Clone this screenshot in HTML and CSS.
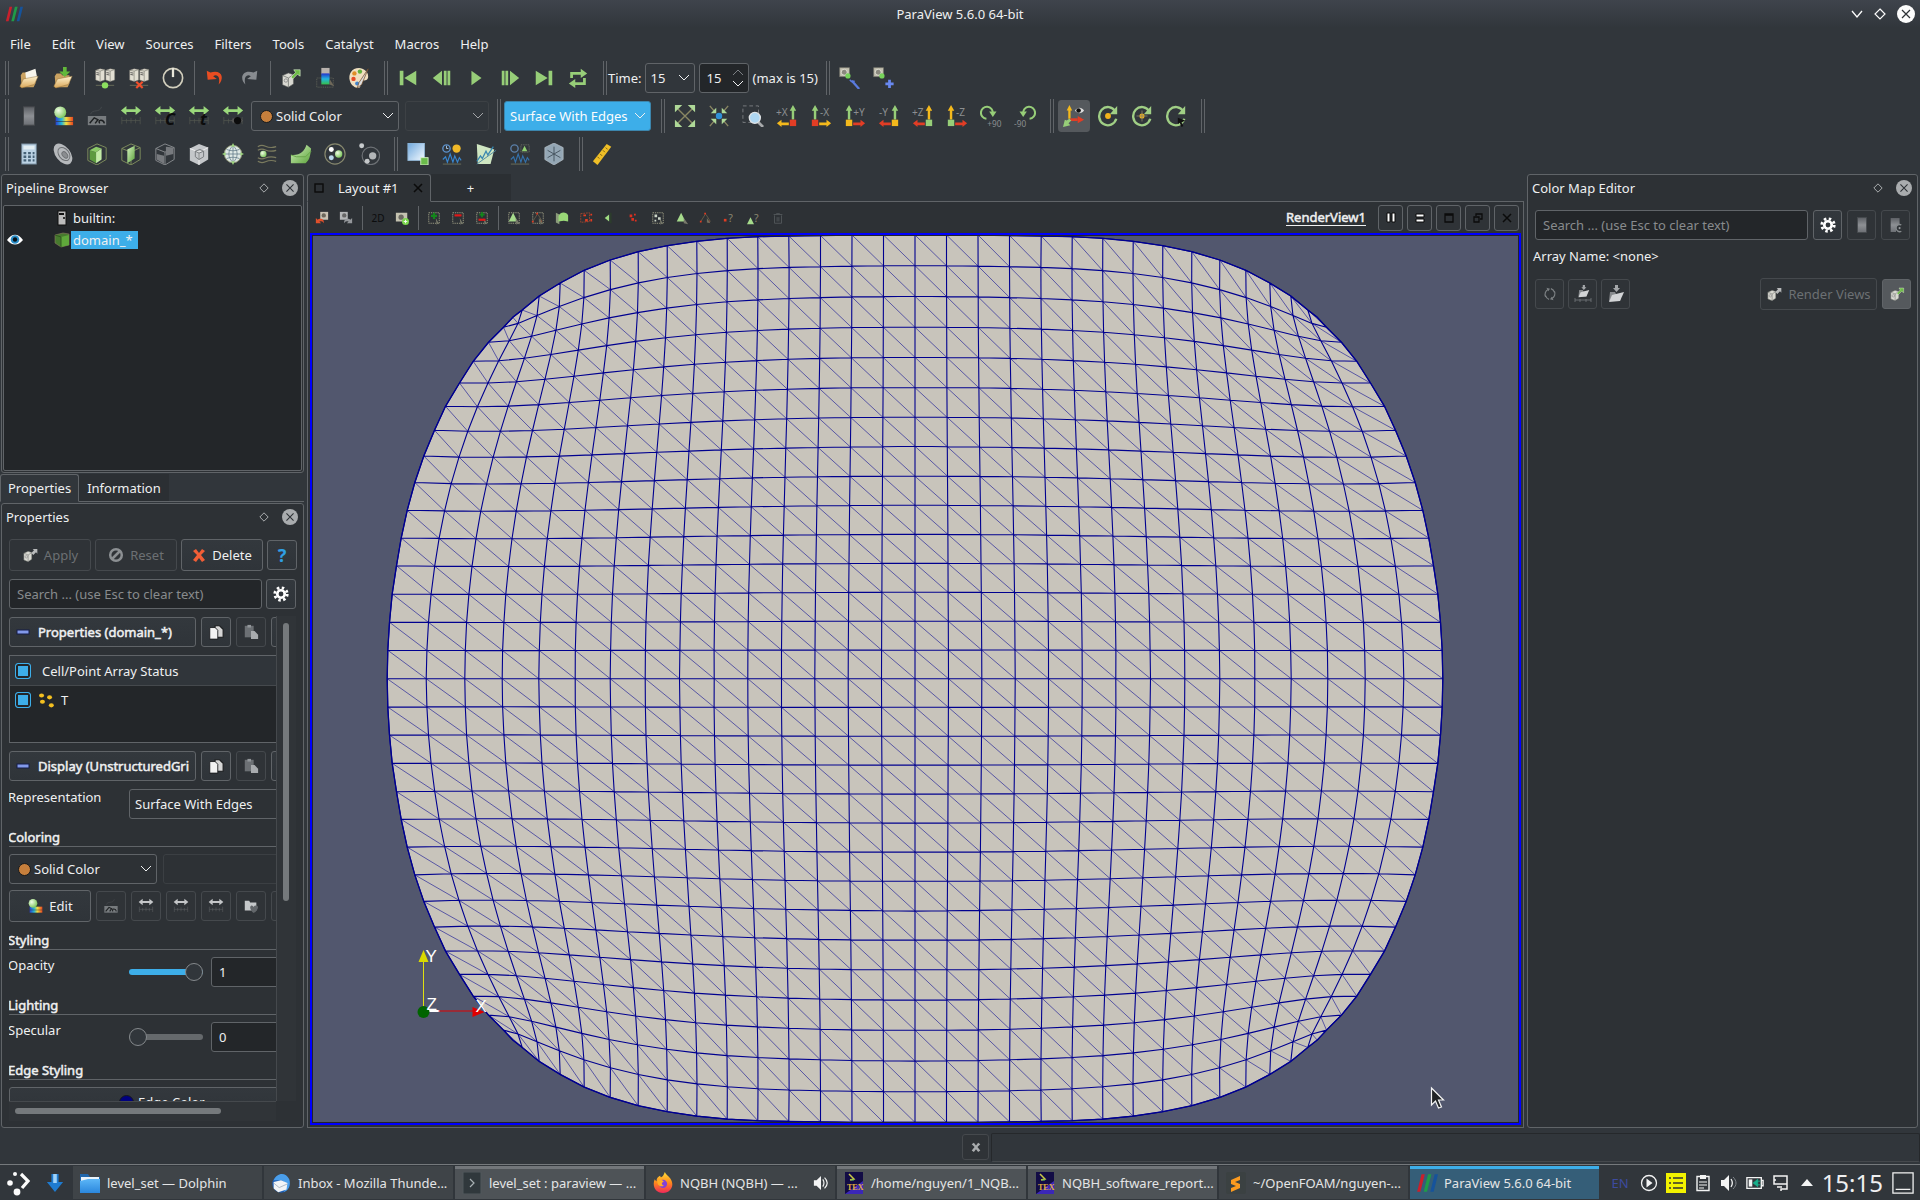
FILE: index.html
```html
<!DOCTYPE html>
<html lang="en">
<head>
<meta charset="utf-8">
<title>ParaView 5.6.0 64-bit</title>
<link rel="stylesheet" href="styles.css">
</head>
<body>
<svg class="library" aria-hidden="true">
  <defs>
    <linearGradient id="g-fold" x1="0" y1="0" x2="0" y2="1"><stop offset="0" stop-color="#fff3cf"/><stop offset="1" stop-color="#d9a658"/></linearGradient>
    <linearGradient id="g-rain" x1="0" y1="0" x2="1" y2="0"><stop offset="0" stop-color="#2a3fd0"/><stop offset=".35" stop-color="#24b8d8"/><stop offset=".6" stop-color="#f0e040"/><stop offset="1" stop-color="#e8431f"/></linearGradient>
    <linearGradient id="g-rainv" x1="0" y1="0" x2="0" y2="1"><stop offset="0" stop-color="#2233cc"/><stop offset=".5" stop-color="#22b5dd"/><stop offset="1" stop-color="#36c04a"/></linearGradient>
    <linearGradient id="g-grey" x1="0" y1="0" x2="0" y2="1"><stop offset="0" stop-color="#5c5f64"/><stop offset=".5" stop-color="#8d9094"/><stop offset="1" stop-color="#6c6f74"/></linearGradient>
    <linearGradient id="g-green" x1="0" y1="0" x2="1" y2="1"><stop offset="0" stop-color="#d5f2bf"/><stop offset="1" stop-color="#5da43c"/></linearGradient>
    <radialGradient id="g-ball" cx=".35" cy=".35" r=".7"><stop offset="0" stop-color="#effbe6"/><stop offset="1" stop-color="#7cc65a"/></radialGradient>
    <linearGradient id="g-blue" x1="0" y1="0" x2="1" y2="1"><stop offset="0" stop-color="#6fa8dd"/><stop offset="1" stop-color="#f4faff"/></linearGradient>
    <linearGradient id="g-fire" x1="0" y1="0" x2="0" y2="1"><stop offset="0" stop-color="#ffdf3a"/><stop offset=".5" stop-color="#ff8a1c"/><stop offset="1" stop-color="#f0275a"/></linearGradient>
    <linearGradient id="g-dolphin" x1="0" y1="0" x2="0" y2="1"><stop offset="0" stop-color="#5cb6f7"/><stop offset="1" stop-color="#2b87dd"/></linearGradient>
  </defs>
  <symbol id="server" viewBox="0 0 16 18"><path d="M1 3l6-2 6 1v14l-6 2-6-2z" fill="#e2dfd3" stroke="#77766d" stroke-width=".6"/><path d="M7 4v14M1 3l6 1 6-2" fill="none" stroke="#77766d" stroke-width=".8"/><path d="M2 6l4 .8M2 8.500l4 .8" stroke="#333" stroke-width="1"/></symbol>
  <symbol id="cubebox" viewBox="0 0 24 24"><path d="M3 9l7-3 6 2v11l-6 4-7-3z" fill="#d9d9d2" stroke="#5f625f" stroke-width=".7"/><path d="M3 9l7 3 6-4M10 12v11" fill="none" stroke="#6c6f6c" stroke-width=".9"/><circle cx="7" cy="15" r="2" fill="none" stroke="#888"/></symbol>
  <symbol id="open" viewBox="0 0 24 24"><path d="M3 9l2-3h5l1 2h8v10l-2 4H4z" fill="#caa261"/><path d="M8 6l11-4 2 10-12 3z" fill="#f7f5ec"/><path d="M2 21l4-8 16-3-4 9-14 4z" fill="url(#g-fold)" stroke="#8e6c34" stroke-width=".5"/></symbol>
  <symbol id="load" viewBox="0 0 24 24"><path d="M3 10l2-3h5l1 2h8v9l-2 4H4z" fill="#caa261"/><path d="M2 21l4-8 16-3-4 9-14 4z" fill="url(#g-fold)" stroke="#8e6c34" stroke-width=".5"/><path d="M12 0h4v5h4l-6 6-6-6h4z" fill="#62b83a"/></symbol>
  <symbol id="connect" viewBox="0 0 24 24"><use href="#server" x="1" y="0" width="13" height="17"/><use href="#server" x="12" y="0" width="13" height="17"/><path d="M2 20h20" stroke="#6b705c"/><circle cx="12" cy="20" r="3.500" fill="#8cdf5f"/></symbol>
  <symbol id="disconnect" viewBox="0 0 24 24"><use href="#server" x="1" y="0" width="13" height="17"/><use href="#server" x="12" y="0" width="13" height="17"/><path d="M2 20h20" stroke="#6b705c"/><path d="M9 16l7 7M16 16l-7 7" stroke="#f0502c" stroke-width="2.400"/></symbol>
  <symbol id="power" viewBox="0 0 24 24"><circle cx="12" cy="12" r="10.500" fill="none" stroke="#d2cfbd" stroke-width="1.800"/><path d="M12 1v10" stroke="#e8e6da" stroke-width="2.500"/></symbol>
  <symbol id="undo" viewBox="0 0 24 24"><path d="M3 4l1 10 10-1-4-3c5-3 8 2 6 9 7-7 3-17-9-13z" fill="#e84d22"/></symbol>
  <symbol id="redo" viewBox="0 0 24 24"><path d="M21 4l-1 10-10-1 4-3c-5-3-8 2-6 9C1 12 5 2 17 6z" fill="#888c90"/></symbol>
  <symbol id="apply" viewBox="0 0 24 24"><use href="#cubebox" width="22" height="24"/><path d="M12 11l5-5-2-3h7v7l-3-2-5 5z" fill="#6dbb46" stroke="#e9f6df" stroke-width=".6"/></symbol>
  <symbol id="applygrey" viewBox="0 0 24 24"><use href="#cubebox" width="22" height="24"/><path d="M14 9l4-4-2-2h7v7l-2-2-4 4z" fill="#b8babb"/></symbol>
  <symbol id="palette-map" viewBox="0 0 24 24"><rect x="3" y="12" width="18" height="10" fill="none" stroke="#66685c" stroke-dasharray="1 1"/><rect x="8" y="1" width="9" height="7" fill="#b9b3ae"/><rect x="8" y="7" width="9" height="12" fill="url(#g-rainv)"/><path d="M17 13l5 8-5-2z" fill="#6f695a"/></symbol>
  <symbol id="palette" viewBox="0 0 24 24"><path d="M12 1C4 1 0 8 2 15c2 7 9 9 11 7 2-3-2-5 2-7 4-1 7 0 7-5 0-5-5-9-10-9z" fill="#f0dfc0"/><circle cx="7" cy="7" r="2.400" fill="#e08d27"/><circle cx="13" cy="5" r="2.400" fill="#62b03d"/><circle cx="6" cy="13" r="2.400" fill="#e74a26"/><circle cx="10" cy="18" r="2.200" fill="#4384cc"/><path d="M22 2L12 17l-2 6 5-4z" fill="#ddd" stroke="#724c29" stroke-width=".8"/></symbol>
  <symbol id="first" viewBox="0 0 24 24"><path d="M3 4h4v16H3zM21 4v16L8 12z" fill="#97ce78"/></symbol>
  <symbol id="prev" viewBox="0 0 24 24"><path d="M12 4v16L2 12zM14 4h3v16h-3zM18 4h3v16h-3z" fill="#97ce78"/></symbol>
  <symbol id="play" viewBox="0 0 24 24"><path d="M7 4l11 8-11 8z" fill="#97ce78"/></symbol>
  <symbol id="next" viewBox="0 0 24 24"><path d="M3 4h3v16H3zM7 4h3v16H7zM12 4l10 8-10 8z" fill="#97ce78"/></symbol>
  <symbol id="last" viewBox="0 0 24 24"><path d="M17 4h4v16h-4zM3 4l13 8-13 8z" fill="#97ce78"/></symbol>
  <symbol id="loop" viewBox="0 0 24 24"><path d="M5 12V7h11M19 12v6H8" fill="none" stroke="#97ce78" stroke-width="3"/><path d="M15 2l7 5-7 5zM9 13l-7 5 7 5z" fill="#97ce78"/></symbol>
  <symbol id="camera" viewBox="0 0 16 16"><rect x="1" y="1" width="13" height="12" fill="#c3c1b0" stroke="#77766d"/><circle cx="7" cy="7" r="4" fill="#8a897e" stroke="#ecebe0"/><circle cx="12" cy="12" r="3.500" fill="#76d35a"/></symbol>
  <symbol id="camwrench" viewBox="0 0 24 24"><use href="#camera" x="0" y="0" width="13" height="13"/><path d="M14 15l8 9" stroke="#5a7be0" stroke-width="2.500"/><path d="M12 14a3 3 0 0 0 5 1" fill="none" stroke="#5a7be0" stroke-width="1.800"/></symbol>
  <symbol id="camplus" viewBox="0 0 24 24"><use href="#camera" x="0" y="0" width="13" height="13"/><path d="M18 14v9M13.500 18.500h9" stroke="#6888f0" stroke-width="3"/></symbol>
  <symbol id="bar" viewBox="0 0 24 24"><rect x="6" y="2" width="12" height="20" fill="url(#g-grey)" stroke="#46494d"/></symbol>
  <symbol id="colormap" viewBox="0 0 24 24"><rect x="4" y="13" width="19" height="9" fill="url(#g-rain)"/><path d="M4 18h19" stroke="#2f3438" stroke-width=".7"/><circle cx="9" cy="8" r="6.500" fill="url(#g-ball)"/></symbol>
  <symbol id="opac" viewBox="0 0 24 24"><rect x="2" y="12" width="20" height="10" fill="#777b7e"/><path d="M4 20l5-6 4 2-3 4M15 20c-3-4 4-5 5 0" fill="none" stroke="#1d2022" stroke-width="1.600"/><path d="M5 10C7 4 15 9 17 2" fill="none" stroke="#45494d"/></symbol>
  <symbol id="range" viewBox="0 0 24 24"><path d="M1 6l6-5v3.500h10V1l6 5-6 5V7.500H7V11z" fill="#9bd97c"/><path d="M2 13v8M7 15v5M12 14v6M17 15v5M22 13v8M2 17h20" stroke="#52564f" stroke-width=".8"/></symbol>
  <symbol id="rangegrey" viewBox="0 0 24 24"><path d="M1 6l6-5v3.500h10V1l6 5-6 5V7.500H7V11z" fill="#c4c6c8"/><path d="M2 13v8M7 15v5M12 14v6M17 15v5M22 13v8M2 17h20" stroke="#5f6265" stroke-width=".8"/></symbol>
  <symbol id="rangeeye" viewBox="0 0 24 24"><use href="#range"/><path d="M10 17c4-5 9-5 13 0-4 5-9 5-13 0z" fill="#555"/><circle cx="17" cy="17" r="4" fill="#0c0c0c"/></symbol>
  <symbol id="calc" viewBox="0 0 24 24"><rect x="4" y="1" width="16" height="22" fill="#bcd3e4" stroke="#6c8191"/><rect x="6" y="3" width="12" height="4" fill="#e3eef2"/><path d="M6 11h3M11 11h3M16 11h2M6 15h3M11 15h3M16 15h2M6 19h3M11 19h3M16 19h2" stroke="#466277" stroke-width="2.500"/></symbol>
  <symbol id="contour" viewBox="0 0 24 24"><ellipse cx="12" cy="12" rx="8" ry="13" transform="rotate(-38 12 12)" fill="#b6b9bc"/><ellipse cx="13" cy="12" rx="5.500" ry="8" transform="rotate(-38 13 12)" fill="none" stroke="#6d7073"/><ellipse cx="14" cy="13" rx="2.500" ry="4" transform="rotate(-38 14 13)" fill="#8a8d90" stroke="#6d7073"/></symbol>
  <symbol id="clip" viewBox="0 0 24 24"><path d="M2 6l10-5 10 4v13l-10 6-10-5z" fill="none" stroke="#81915e"/><path d="M4 8l7 2v12l-7-4z" fill="#5d9a40"/><path d="M11 10l6-4v12l-6 4z" fill="#c3eca7"/><path d="M4 8l7-4 6 2-6 4z" fill="#8ccb68"/></symbol>
  <symbol id="slice" viewBox="0 0 24 24"><path d="M2 6l10-5 10 4v13l-10 6-10-5z" fill="none" stroke="#81915e"/><path d="M2 6l10 4 10-5M12 10v14" fill="none" stroke="#81915e"/><path d="M8 7l8-4v14l-8 5z" fill="url(#g-green)"/></symbol>
  <symbol id="threshold" viewBox="0 0 24 24"><path d="M2 6l10-5 10 4v13l-10 6-10-5zM2 6l10 4 10-5M12 10v14" fill="none" stroke="#8a8d90"/><path d="M3 12l8 2v9l-8-5zM13 4l8 1v7l-8 2z" fill="#777a7e"/></symbol>
  <symbol id="subset" viewBox="0 0 24 24"><path d="M2 6l10-5 10 4v13l-10 6-10-5z" fill="#c4c7ca"/><path d="M2 6l10 4 10-5M12 10v14" fill="none" stroke="#f0f0f0"/><path d="M8 9l5-2 4 2v6l-5 3-4-3zM8 9l4 2 5-2M12 11v7" fill="none" stroke="#72767a"/></symbol>
  <symbol id="glyph" viewBox="0 0 24 24"><circle cx="12" cy="12" r="9.500" fill="#dfe9e6" stroke="#89916e"/><path d="M3 12h18M12 3v18M5 7c4 2 10 2 14 0M5 17c4-2 10-2 14 0M12 3c-6 5-6 13 0 18M12 3c6 5 6 13 0 18" fill="none" stroke="#5c7484" stroke-width=".8"/><path d="M12 0l2 4h-4zM12 24l2-4h-4zM0 12l4-2v4zM24 12l-4-2v4z" fill="#9ed67f"/></symbol>
  <symbol id="stream" viewBox="0 0 24 24"><path d="M2 4c8-5 8 4 20 0M2 8c8-5 8 4 20 0M2 16c8 5 8-4 20 0M2 20c8 5 8-4 20 0" fill="none" stroke="#7b7b5f" stroke-width="1.300"/><circle cx="8" cy="12" r="3.500" fill="url(#g-ball)"/></symbol>
  <symbol id="warp" viewBox="0 0 24 24"><path d="M1 13c10 1 15-4 17-11l5 4c-1 9-2 13-6 16H1z" fill="url(#g-green)"/><path d="M1 13l6 2h10l6-6" fill="none" stroke="#65a346"/></symbol>
  <symbol id="group" viewBox="0 0 24 24"><circle cx="12" cy="12" r="11" fill="none" stroke="#87886e" stroke-width="1.300"/><circle cx="8" cy="7" r="2.700" fill="#fff"/><circle cx="16" cy="12" r="4" fill="url(#g-ball)"/><circle cx="8" cy="16" r="2.700" fill="#bcd9ee"/></symbol>
  <symbol id="extract" viewBox="0 0 24 24"><circle cx="14" cy="14" r="9.500" fill="none" stroke="#6d7175" stroke-width="1.300"/><circle cx="4" cy="3" r="2.700" fill="#c8cbcd"/><circle cx="16" cy="14" r="4" fill="#b3b6b8"/><circle cx="10" cy="20" r="2.700" fill="#c5c8ca"/></symbol>
  <symbol id="selarea" viewBox="0 0 24 24"><rect x="1" y="0" width="18" height="19" fill="url(#g-blue)" stroke="#90b5d4"/><rect x="15" y="16" width="8" height="8" fill="#6bbb4b" stroke="#d5efc7"/></symbol>
  <symbol id="plotsel" viewBox="0 0 24 24"><circle cx="6" cy="6" r="4" fill="none" stroke="#5c91cb" stroke-width="1.500"/><path d="M6 3v3h2" stroke="#a9c9ea" fill="none"/><circle cx="17" cy="6" r="4.500" fill="#f0b928"/><path d="M2 18l3-3 2 6 3-9 3 9 2-7 3 7 2-5 2 3" fill="none" stroke="#3987d0" stroke-width="1.200"/><path d="M2 23h20" stroke="#6b705c"/></symbol>
  <symbol id="plotline" viewBox="0 0 24 24"><path d="M2 1l19 6-4 16H3z" fill="#cfe6c2"/><path d="M2 20l4-6 2 3 4-8 2 4 6-9" fill="none" stroke="#3987b0" stroke-width="1.400"/><path d="M2 23L23 8" stroke="#4c86a0"/></symbol>
  <symbol id="plotover" viewBox="0 0 24 24"><circle cx="6" cy="6" r="4" fill="none" stroke="#5b7fa8" stroke-width="1.500"/><rect x="13" y="2" width="9" height="8" fill="none" stroke="#74786a" stroke-dasharray="1 1"/><path d="M17 3l3 6h-6z" fill="#92d170"/><path d="M2 18l3-3 2 6 3-9 3 9 2-7 3 7 2-5 2 3" fill="none" stroke="#3472ad" stroke-width="1.200"/><path d="M2 23h20" stroke="#6b705c"/></symbol>
  <symbol id="probe" viewBox="0 0 24 24"><path d="M2 5l10-5 10 5v13l-10 6-10-6z" fill="#94a7b5" stroke="#bcc5cb" stroke-width=".7"/><path d="M12 4v16M5 8l14 8M19 8L5 16" stroke="#43515c"/></symbol>
  <symbol id="ruler" viewBox="0 0 24 24"><path d="M1 20L16 1l5 3L6 24z" fill="#efbf27"/><path d="M6 15l2 2M9 12l2 2M12 8l2 2M15 5l2 2" stroke="#7a5a0c"/></symbol>
  <symbol id="reset" viewBox="0 0 24 24"><path d="M4 4l16 16M20 4L4 20" stroke="#8a8763" stroke-width="1.500"/><path d="M1 0h8L1 8zM23 0h-8l8 8zM1 24h8l-8-8zM23 24h-8l8-8z" fill="#afd998"/></symbol>
  <symbol id="zoomdata" viewBox="0 0 24 24"><path d="M2 1l6 7M22 1l-6 7M2 23l6-7M22 23l-6-7" stroke="#8a8763" stroke-width="1.500"/><path d="M9 9H3l6-6zM15 9h6l-6-6zM9 15H3l6 6zM15 15h6l-6 6z" fill="#afd998"/><circle cx="12" cy="12" r="3.500" fill="#2f91d6"/></symbol>
  <symbol id="zoombox" viewBox="0 0 24 24"><rect x="1" y="1" width="17" height="18" fill="none" stroke="#7d8082" stroke-dasharray="4 3"/><path d="M18 19l5 5" stroke="#a8aaac" stroke-width="3"/><circle cx="14" cy="14" r="6" fill="#aed7f2" stroke="#dfe3e5" stroke-width="1.500"/></symbol>
  <symbol id="up" viewBox="0 0 10 18"><path d="M5 0l4 7H6.500v11h-3V7H1z"/></symbol>
  <symbol id="orient" viewBox="0 0 24 24"><path d="M7 15V5" stroke="#f4b91c" stroke-width="2.500"/><path d="M7 0l3 6H4z" fill="#f4b91c"/><path d="M8 16h8" stroke="#e23d25" stroke-width="3"/><path d="M23 16l-7 4v-8z" fill="#e23d25"/><path d="M0 24l2-8 2 1 3-2 2 2-3 3 2 2z" fill="#97ce78"/><path d="M13 6c3-4 7-4 10 0-3 4-7 4-10 0z" fill="#ddd"/><circle cx="17" cy="6" r="2.500" fill="#111"/></symbol>
  <symbol id="ring" viewBox="0 0 24 24"><path d="M20 7a9.500 10 0 1 0 1 8" fill="none" stroke="#a0cf85" stroke-width="2.600"/><path d="M22 1v9h-8z" fill="#a0cf85"/></symbol>
  <symbol id="center1" viewBox="0 0 24 24"><use href="#ring"/><circle cx="12" cy="12" r="3.200" fill="#f2b21b"/></symbol>
  <symbol id="center2" viewBox="0 0 24 24"><use href="#ring"/><circle cx="12" cy="12" r="2.800" fill="#f2b21b"/><path d="M12 6v12M6 12h12" stroke="#8b856b" stroke-width=".9"/></symbol>
  <symbol id="center3" viewBox="0 0 24 24"><use href="#ring"/><path d="M14 14l8 3-4 2 2 4-2 1-2-5-2 2z" fill="#111"/></symbol>
  <symbol id="camundo" viewBox="0 0 16 16"><rect x="6" y="1" width="9" height="9" fill="#c9c2b4"/><circle cx="10" cy="5" r="2.500" fill="#6c675c"/><path d="M1 8v6h6l-2-2c3-1 4 0 5 2 1-6-5-6-7-4z" fill="#e0502b"/></symbol>
  <symbol id="camredo" viewBox="0 0 16 16"><rect x="1" y="1" width="9" height="9" fill="#b4b6b8"/><circle cx="6" cy="5" r="2.500" fill="#666"/><path d="M15 8v6H9l2-2c-3-1-4 0-5 2-1-6 5-6 7-4z" fill="#94979b"/></symbol>
  <symbol id="camadj" viewBox="0 0 16 16"><rect x="1" y="2" width="13" height="10" fill="#c4c2b0"/><circle cx="7" cy="7" r="3" fill="#6a6960"/><circle cx="12" cy="12" r="4" fill="#7bd64e"/><path d="M12 10v4M10 12h4" stroke="#fff"/></symbol>
  <symbol id="dots" viewBox="0 0 16 16"><rect x="2" y="2" width="12" height="12" fill="none" stroke="#a2a288" stroke-dasharray="1.500 1"/><path d="M10 8l4 7-2-.5-1 1.500z" fill="#77796a"/></symbol>
  <symbol id="seladd" viewBox="0 0 16 16"><use href="#dots"/><path d="M8 2v7M4.500 5.500h7" stroke="#13861b" stroke-width="2.500"/></symbol>
  <symbol id="selsub" viewBox="0 0 16 16"><use href="#dots"/><path d="M4 5h8" stroke="#e01818" stroke-width="2.500"/></symbol>
  <symbol id="seltog" viewBox="0 0 16 16"><use href="#dots"/><path d="M8 1v6M5 4h6" stroke="#13861b" stroke-width="2"/><path d="M4 10h8" stroke="#e01818" stroke-width="2.500"/></symbol>
  <symbol id="tri" viewBox="0 0 16 16"><path d="M7 2l5 10H2z" fill="#a6db8c"/><path d="M10 8l5 7-5-1z" fill="#77796a"/></symbol>
  <symbol id="selcell" viewBox="0 0 16 16"><use href="#dots"/><use href="#tri"/></symbol>
  <symbol id="pts" viewBox="0 0 16 16"><path d="M7 4l-5 8M8 4l5 8" stroke="#76674e" stroke-width=".8"/><path d="M6 2h2v2H6zM1 11h2v2H1zM10 11h2v2h-2z" fill="#e03c22"/><path d="M9 8l4 6-4-1z" fill="#6c6f5e"/></symbol>
  <symbol id="selpts" viewBox="0 0 16 16"><use href="#dots"/><use href="#pts"/></symbol>
  <symbol id="frus" viewBox="0 0 16 16"><path d="M1 2l4 2v11l-4-2z" fill="#8a9b7a"/><path d="M4 6c1-5 9-6 11-1v7l-5-1-6 1z" fill="#99d877"/></symbol>
  <symbol id="frusp" viewBox="0 0 16 16"><path d="M2 3l10-1v10L2 13z" fill="none" stroke="#a2472f" stroke-dasharray="2 1"/><path d="M5 4h3v2H5zM7 9h3v3H7zM13 3h2v2h-2zM13 9h2v3h-2z" fill="#e03c22"/></symbol>
  <symbol id="polyc" viewBox="0 0 16 16"><path d="M2 8l5-4v8z" fill="#9fdc82"/><path d="M9 2v12" stroke="#2d4825"/></symbol>
  <symbol id="polyp" viewBox="0 0 16 16"><path d="M3 4h3v3H3zM8 3h2v2H8zM5 8h3v3H5zM9 10h2v2H9z" fill="#db3020"/></symbol>
  <symbol id="blocks" viewBox="0 0 16 16"><use href="#dots"/><path d="M4 4h3v3H4zM8 7h3v3H8zM4 10h2v2H4z" fill="#ccd5c7"/></symbol>
  <symbol id="trash" viewBox="0 0 16 16"><path d="M3 4h10M6 3h4M4 5v9h8V5M7 7v5M9 7v5" fill="none" stroke="#54585b"/></symbol>
  <symbol id="diamond" viewBox="0 0 12 12"><path d="M6 1l5 5-5 5-5-5z" fill="none" stroke="currentColor" stroke-width="1.200"/></symbol>
  <symbol id="close" viewBox="0 0 18 18"><circle cx="9" cy="9" r="9" fill="currentColor"/><path d="M5 5l8 8M13 5l-8 8" stroke="#2d3135" stroke-width="1.200"/></symbol>
  <symbol id="pv" viewBox="0 0 20 18"><path d="M5 1h3L4 17H1z" fill="#c9202c"/><path d="M11 1h3l-4 16H7z" fill="#1f9c48"/><path d="M17 1h3l-4 16h-3z" fill="#16539b"/></symbol>
  <symbol id="gear" viewBox="0 0 18 18"><circle cx="9" cy="9" r="4.200" fill="none" stroke="#fff" stroke-width="3"/><circle cx="9" cy="9" r="7" fill="none" stroke="#fff" stroke-width="3.200" stroke-dasharray="2.750 2.750"/></symbol>
  <symbol id="copy" viewBox="0 0 18 18"><path d="M8 2h5l4 4v9H8z" fill="#d5d5d5" stroke="#191b1d" stroke-width="1.200"/><path d="M2 4h6l3 3v10H2z" fill="#f2f2f2" stroke="#191b1d"/></symbol>
  <symbol id="paste" viewBox="0 0 18 18"><path d="M2 2h10v13H2z" fill="#6c7074"/><path d="M5 1h4v3H5z" fill="#92969a"/><path d="M9 8h4l4 4v5H9z" fill="#a8abae"/></symbol>
  <symbol id="eye" viewBox="0 0 16 12"><path d="M0 6c5-7 11-7 16 0-5 6-11 6-16 0z" fill="#fff"/><circle cx="8" cy="5.500" r="4.300" fill="#2b8fc9"/><circle cx="8" cy="5.500" r="2.200" fill="#07121a"/></symbol>
  <symbol id="pc" viewBox="0 0 10 16"><rect x="1" y="1" width="8" height="14" fill="#bcbcbc" stroke="#111"/><path d="M2 3h5v2H2z" fill="#111"/><path d="M6 7h2v2H6z" fill="#333"/></symbol>
  <symbol id="greencube" viewBox="0 0 16 16"><path d="M1 3l8-2 6 1v11l-8 2-6-4z" fill="#477a2e" stroke="#8b7c60" stroke-width=".6"/><path d="M7 5l8-2v10l-8 2z" fill="#5fa83b"/><path d="M1 3l6 2v10" fill="none" stroke="#315a20"/></symbol>
  <symbol id="cross" viewBox="0 0 14 14"><path d="M1 3l3-2 3 4 3-4 3 2-4 4 4 5-3 2-3-4-3 4-3-2 4-5z" fill="#f25e36"/></symbol>
  <symbol id="ban" viewBox="0 0 16 16"><circle cx="8" cy="8" r="5.800" fill="none" stroke="#8c9093" stroke-width="2.500"/><path d="M4 12l8-8" stroke="#8c9093" stroke-width="2.500"/></symbol>
  <symbol id="minus" viewBox="0 0 14 8"><rect x="1" y="2" width="12" height="4" fill="#8299ea" stroke="#151c48"/></symbol>
  <symbol id="points" viewBox="0 0 18 18"><g fill="#f3bf20"><ellipse cx="4" cy="4" rx="2.800" ry="2.300"/><ellipse cx="13" cy="6" rx="2.800" ry="2.300"/><ellipse cx="5" cy="11" rx="2.800" ry="2.300"/><ellipse cx="15" cy="15" rx="2.800" ry="2.300"/></g></symbol>
  <symbol id="heart" viewBox="0 0 18 18"><path d="M2 3h5l1 2h7v9H2z" fill="#c5c8ca"/><path d="M8 10c2-3 3-1 4 0 1-2 4-2 5 0 0 3-3 6-5 7-2-2-4-4-4-7z" fill="#62666a"/></symbol>
  <symbol id="greyfold" viewBox="0 0 18 18"><path d="M2 16l1-9h5l1 2h6l-2 7z" fill="#86898c"/><path d="M2 17l3-7 12-3-4 9z" fill="#d2d4d6"/><path d="M8 0h3v3h2L9.500 7 6 3h2z" fill="#a3a6a9"/></symbol>
  <symbol id="foldrange" viewBox="0 0 18 18"><use href="#greyfold" x="3" y="0" width="13" height="13"/><path d="M1 13v4M6 14v3M12 14v3M17 13v4M1 15h16" stroke="#74787b" stroke-width=".8"/></symbol>
  <symbol id="refresh" viewBox="0 0 18 18"><path d="M4 12a6 6 0 0 1 3-8M14 6a6 6 0 0 1-3 8M10 3a6 6 0 0 1 4 4M8 15a6 6 0 0 1-4-4" fill="none" stroke="#7c8083" stroke-width="1.300"/><path d="M5 2l4 1-2 3zM13 16l-4-1 2-3z" fill="#7c8083"/></symbol>
  <symbol id="barsave" viewBox="0 0 18 18"><path d="M3 1h10v7l-4 3v6H3z" fill="url(#g-grey)"/><path d="M15 9a4 4 0 1 0 0 7" fill="none" stroke="#85898c" stroke-width="1.500"/><circle cx="13" cy="12.500" r="1.200" fill="#9a9da0"/></symbol>
  <symbol id="dolphin" viewBox="0 0 22 22"><path d="M1 2h8l2 3h10v15H1z" fill="#1f66ac"/><path d="M2 5h18v4H2z" fill="#e9f3fb"/><path d="M1 9l8-2h12v14H1z" fill="url(#g-dolphin)"/></symbol>
  <symbol id="tbird" viewBox="0 0 22 24"><circle cx="11" cy="13" r="9.500" fill="#1f5fb5"/><path d="M3 9C6 1 16-1 20 8c2 7-1 12-6 14 5-7 1-13-4-13z" fill="#4a9eea"/><path d="M3 11l8-2 7 3-1 7-9 3-5-4z" fill="#f1f4f7"/><path d="M3 12l6 5 9-4" fill="none" stroke="#aab5c2"/></symbol>
  <symbol id="konsole" viewBox="0 0 20 22"><rect x="1" y="0" width="18" height="22" fill="#30383c" stroke="#50585c"/><path d="M8 7l4 4-4 4" fill="none" stroke="#a9b1b4" stroke-width="1.200"/></symbol>
  <symbol id="firefox" viewBox="0 0 22 24"><path d="M13 0c1 3 4 4 6 7 5 7 1 16-8 16C2 23-1 14 2 8c1 1 1 2 2 2 0-4 2-5 4-6 0 3 3 2 5-4z" fill="url(#g-fire)"/><circle cx="11" cy="13" r="4.500" fill="#8441d6"/><path d="M5 9c3-2 6 0 7 2-3 0-3 3 0 4-4 2-8-1-7-6z" fill="#ffac25"/></symbol>
  <symbol id="texbg" viewBox="0 0 20 22"><rect x="1" y="0" width="18" height="22" fill="#120c45"/><path d="M1 22L19 9v13z" fill="#3b27b8"/><path d="M5 2l5 5-4 1" fill="none" stroke="#c7c746" stroke-width="1.500"/><path d="M7 8l3 0" stroke="#57b95e"/></symbol>
  <symbol id="sublime" viewBox="0 0 20 22"><rect x="0" y="0" width="20" height="22" rx="2" fill="#3b4142"/><path d="M5 8l9-4v4l-5 2 5 2v4l-9 4v-4l5-2-5-2z" fill="#fb9a20"/></symbol>
  <symbol id="speaker" viewBox="0 0 18 18"><path d="M1 6h3l5-5v16l-5-5H1z" fill="#f3f4f4"/><path d="M11 5c2 3 2 5 0 8M13 3c4 4 4 8 0 12" fill="none" stroke="#f3f4f4" stroke-width="1.300"/></symbol>
</svg>

<header class="titlebar">
  <svg class="ic18"><use href="#pv"/></svg>
  <h1>ParaView 5.6.0 64-bit</h1>
  <div class="winbtns">
    <button aria-label="Minimize"><svg viewBox="0 0 12 12"><path d="M1 3l5 6 5-6" fill="none" stroke="#fcfcfc" stroke-width="1.300"/></svg></button>
    <button aria-label="Maximize"><svg><use href="#diamond"/></svg></button>
    <button aria-label="Close" class="big"><svg><use href="#close"/></svg></button>
  </div>
</header>
<nav class="menubar">
  <a href="#">File</a><a href="#">Edit</a><a href="#">View</a><a href="#">Sources</a><a href="#">Filters</a><a href="#">Tools</a><a href="#">Catalyst</a><a href="#">Macros</a><a href="#">Help</a>
</nav>

<div class="toolrow">
  <div class="toolbar">
    <button aria-label="Open"><svg><use href="#open"/></svg></button><button aria-label="Load state"><svg><use href="#load"/></svg></button><i class="sep"></i>
    <button aria-label="Connect"><svg><use href="#connect"/></svg></button><button aria-label="Disconnect"><svg><use href="#disconnect"/></svg></button><button aria-label="Shut down server"><svg><use href="#power"/></svg></button><i class="sep"></i>
    <button aria-label="Undo"><svg><use href="#undo"/></svg></button><button aria-label="Redo"><svg><use href="#redo"/></svg></button><i class="sep"></i>
    <button aria-label="Auto apply"><svg><use href="#apply"/></svg></button><button aria-label="Find data"><svg><use href="#palette-map"/></svg></button><button aria-label="Load palette"><svg><use href="#palette"/></svg></button>
  </div>
  <div class="toolbar">
    <button aria-label="First frame"><svg><use href="#first"/></svg></button><button aria-label="Previous frame"><svg><use href="#prev"/></svg></button><button aria-label="Play"><svg><use href="#play"/></svg></button><button aria-label="Next frame"><svg><use href="#next"/></svg></button><button aria-label="Last frame"><svg><use href="#last"/></svg></button><button aria-label="Loop"><svg><use href="#loop"/></svg></button>
  </div>
  <div class="toolbar time">
    <label for="time">Time:</label>
    <select id="time" class="field w50"><option>15</option></select>
    <span class="spin"><input id="frame" class="field" value="15" aria-label="Frame"><svg viewBox="0 0 12 20"><path d="M1 7l5-5 5 5" fill="none" stroke="#7b7f83"/><path d="M1 13l5 5 5-5" fill="none" stroke="#eff0f1"/></svg></span>
    <span>(max is 15)</span>
  </div>
  <div class="toolbar">
    <button aria-label="Camera links"><svg><use href="#camwrench"/></svg></button><button aria-label="Add camera link"><svg><use href="#camplus"/></svg></button>
  </div>
</div>

<div class="toolrow">
  <div class="toolbar">
    <button aria-label="Color legend"><svg><use href="#bar"/></svg></button><button aria-label="Edit color map"><svg><use href="#colormap"/></svg></button><button aria-label="Separate color map"><svg><use href="#opac"/></svg></button><button aria-label="Rescale to data"><svg><use href="#range"/></svg></button><button aria-label="Rescale to custom"><svg viewBox="0 0 24 24"><use href="#range"/><text x="12" y="22" class="ic-letter">C</text></svg></button><button aria-label="Rescale over time"><svg viewBox="0 0 24 24"><use href="#range"/><text x="13" y="22" class="ic-letter">t</text></svg></button><button aria-label="Rescale to visible"><svg><use href="#rangeeye"/></svg></button>
    <span class="combo"><i class="dot"></i><select class="field w148" aria-label="Coloring"><option>Solid Color</option></select></span>
    <select class="field w84" aria-label="Component" disabled><option></option></select>
  </div>
  <div class="toolbar rep">
    <select class="field blue" aria-label="Representation"><option>Surface With Edges</option></select>
  </div>
  <div class="toolbar cams">
    <button aria-label="Reset camera"><svg><use href="#reset"/></svg></button><button aria-label="Zoom to data"><svg><use href="#zoomdata"/></svg></button><button aria-label="Zoom to box"><svg><use href="#zoombox"/></svg></button>
    <button aria-label="View +X"><svg viewBox="0 0 24 24"><use href="#up" x="14" y="0" width="9" height="16" fill="#97ce78"/><path d="M1 20l5-4v3h8v3H6v2z" fill="#f4b91c"/><path d="M15 16h7v7h-7z" fill="#e23d25"/><text x="0" y="12" class="ic-ax">+X</text></svg></button>
    <button aria-label="View -X"><svg viewBox="0 0 24 24"><use href="#up" x="1" y="0" width="9" height="16" fill="#97ce78"/><path d="M23 20l-5-4v3h-8v3h8v2z" fill="#f4b91c"/><path d="M2 16h7v7H2z" fill="#e23d25"/><text x="11" y="12" class="ic-ax">-X</text></svg></button>
    <button aria-label="View +Y"><svg viewBox="0 0 24 24"><use href="#up" x="1" y="0" width="9" height="16" fill="#97ce78"/><path d="M23 20l-5-4v3h-8v3h8v2z" fill="#e23d25"/><path d="M2 16h7v7H2z" fill="#f4b91c"/><text x="10" y="12" class="ic-ax">+Y</text></svg></button>
    <button aria-label="View -Y"><svg viewBox="0 0 24 24"><use href="#up" x="14" y="0" width="9" height="16" fill="#97ce78"/><path d="M1 20l5-4v3h8v3H6v2z" fill="#e23d25"/><path d="M15 16h7v7h-7z" fill="#f4b91c"/><text x="1" y="12" class="ic-ax">-Y</text></svg></button>
    <button aria-label="View +Z"><svg viewBox="0 0 24 24"><use href="#up" x="14" y="0" width="9" height="16" fill="#f4b91c"/><path d="M1 20l5-4v3h8v3H6v2z" fill="#e23d25"/><path d="M15 16h7v7h-7z" fill="#97ce78"/><text x="0" y="12" class="ic-ax">+Z</text></svg></button>
    <button aria-label="View -Z"><svg viewBox="0 0 24 24"><use href="#up" x="1" y="0" width="9" height="16" fill="#f4b91c"/><path d="M23 20l-5-4v3h-8v3h8v2z" fill="#e23d25"/><path d="M2 16h7v7H2z" fill="#97ce78"/><text x="11" y="12" class="ic-ax">-Z</text></svg></button>
    <button aria-label="Rotate +90"><svg viewBox="0 0 24 24"><path d="M7 15a6.500 6.500 0 1 1 7-6" fill="none" stroke="#97ce78" stroke-width="2.200"/><path d="M10 7h8l-4 6z" fill="#97ce78"/><text x="8" y="24" class="ic-deg">+90</text></svg></button>
    <button aria-label="Rotate -90"><svg viewBox="0 0 24 24"><path d="M17 15a6.500 6.500 0 1 0-7-6" fill="none" stroke="#97ce78" stroke-width="2.200"/><path d="M14 7H6l4 6z" fill="#97ce78"/><text x="0" y="24" class="ic-deg">-90</text></svg></button>
  </div>
  <div class="toolbar">
    <button aria-label="Orientation axes" class="pressed"><svg><use href="#orient"/></svg></button><button aria-label="Show center"><svg><use href="#center1"/></svg></button><button aria-label="Reset center"><svg><use href="#center2"/></svg></button><button aria-label="Pick center"><svg><use href="#center3"/></svg></button>
  </div>
  <div class="toolbar"></div>
</div>

<div class="toolrow">
  <div class="toolbar">
    <button aria-label="Calculator"><svg><use href="#calc"/></svg></button><button aria-label="Contour"><svg><use href="#contour"/></svg></button><button aria-label="Clip"><svg><use href="#clip"/></svg></button><button aria-label="Slice"><svg><use href="#slice"/></svg></button><button aria-label="Threshold"><svg><use href="#threshold"/></svg></button><button aria-label="Extract subset"><svg><use href="#subset"/></svg></button><button aria-label="Glyph"><svg><use href="#glyph"/></svg></button><button aria-label="Stream tracer"><svg><use href="#stream"/></svg></button><button aria-label="Warp"><svg><use href="#warp"/></svg></button><button aria-label="Group datasets"><svg><use href="#group"/></svg></button><button aria-label="Extract level"><svg><use href="#extract"/></svg></button>
  </div>
  <div class="toolbar">
    <button aria-label="Extract selection"><svg><use href="#selarea"/></svg></button><button aria-label="Plot selection over time"><svg><use href="#plotsel"/></svg></button><button aria-label="Plot over line"><svg><use href="#plotline"/></svg></button><button aria-label="Plot data over time"><svg><use href="#plotover"/></svg></button><button aria-label="Probe"><svg><use href="#probe"/></svg></button>
  </div>
  <div class="toolbar">
    <button aria-label="Ruler"><svg><use href="#ruler"/></svg></button>
  </div>
</div>

<main class="workspace">
  <aside class="left">
    <section class="dock pipeline">
      <div class="dockhead"><h2>Pipeline Browser</h2><button aria-label="Float"><svg class="ic10"><use href="#diamond"/></svg></button><button aria-label="Close"><svg class="ic16"><use href="#close"/></svg></button></div>
      <ul class="tree">
        <li><span class="vis"></span><svg class="ic16"><use href="#pc"/></svg><span class="name">builtin:</span></li>
        <li><span class="vis"><svg class="ic16"><use href="#eye"/></svg></span><svg class="ic16"><use href="#greencube"/></svg><span class="name sel">domain_*</span></li>
      </ul>
    </section>
    <div class="tabs"><button class="tab on">Properties</button><button class="tab">Information</button><i></i></div>
    <section class="dock props">
      <div class="dockhead"><h2>Properties</h2><button aria-label="Float"><svg class="ic10"><use href="#diamond"/></svg></button><button aria-label="Close"><svg class="ic16"><use href="#close"/></svg></button></div>
      <div class="actions">
        <button class="btn tall" disabled><svg class="ic16"><use href="#applygrey"/></svg>Apply</button>
        <button class="btn tall" disabled><svg class="ic16"><use href="#ban"/></svg>Reset</button>
        <button class="btn tall"><svg class="ic14"><use href="#cross"/></svg>Delete</button>
        <button class="btn sq help">?</button>
      </div>
      <div class="search"><input class="field" placeholder="Search ... (use Esc to clear text)" aria-label="Search properties"><button class="btn sq" aria-label="Advanced"><svg class="ic16"><use href="#gear"/></svg></button></div>
      <div class="scroll">
        <div class="view">
          <div class="content">
            <div class="row"><button class="btn group"><svg class="ic14"><use href="#minus"/></svg><span>Properties (domain_*)</span></button><button class="btn sq" aria-label="Copy"><svg class="ic16"><use href="#copy"/></svg></button><button class="btn sq" aria-label="Paste" disabled><svg class="ic16"><use href="#paste"/></svg></button><button class="btn sq" aria-label="Reload"></button></div>
            <div class="arrays">
              <label class="hd"><input type="checkbox" checked>Cell/Point Array Status</label>
              <label><input type="checkbox" checked><svg class="ic16"><use href="#points"/></svg>T</label>
            </div>
            <div class="row"><button class="btn group"><svg class="ic14"><use href="#minus"/></svg><span>Display (UnstructuredGri</span></button><button class="btn sq" aria-label="Copy"><svg class="ic16"><use href="#copy"/></svg></button><button class="btn sq" aria-label="Paste" disabled><svg class="ic16"><use href="#paste"/></svg></button><button class="btn sq" aria-label="Reload"></button></div>
            <div class="prop"><label for="rep">Representation</label><select id="rep" class="field grow"><option>Surface With Edges</option></select></div>
            <h3>Coloring</h3>
            <div class="row pad"><span class="combo"><i class="dot"></i><select class="field w148" aria-label="Color by"><option>Solid Color</option></select></span><select class="field grow" aria-label="Color component" disabled><option></option></select></div>
            <div class="row edit"><button class="btn tall"><svg class="ic16"><use href="#colormap"/></svg>Edit</button><button class="btn sq" aria-label="Separate" disabled><svg class="ic16"><use href="#opac"/></svg></button><button class="btn sq" aria-label="Rescale" disabled><svg class="ic16"><use href="#rangegrey"/></svg></button><button class="btn sq" aria-label="Rescale custom" disabled><svg class="ic16"><use href="#rangegrey"/></svg></button><button class="btn sq" aria-label="Rescale time" disabled><svg class="ic16"><use href="#rangegrey"/></svg></button><button class="btn sq" aria-label="Presets" disabled><svg class="ic16"><use href="#heart"/></svg></button><button class="btn sq" aria-label="More" disabled></button></div>
            <h3>Styling</h3>
            <div class="prop"><label for="opacity">Opacity</label><input id="opacity" type="range" class="full" min="0" max="1" step="0.01" value="1"><input class="field grow" value="1" aria-label="Opacity value"></div>
            <h3>Lighting</h3>
            <div class="prop"><label for="specular">Specular</label><input id="specular" type="range" min="0" max="1" step="0.01" value="0"><input class="field grow" value="0" aria-label="Specular value"></div>
            <h3>Edge Styling</h3>
            <button class="btn edgecolor"><i class="dot navy"></i>Edge Color</button>
          </div>
        </div>
        <div class="vbar"><i></i></div>
        <div class="hbar"><i></i></div>
      </div>
    </section>
  </aside>

  <section class="center">
    <div class="tabs layouts"><button class="tab on"><svg class="ic10" viewBox="0 0 10 10"><rect x="1" y="1" width="8" height="8" fill="none" stroke="#0b0b0b" stroke-width="1.400"/></svg><span>Layout #1</span><svg class="ic10" viewBox="0 0 10 10"><path d="M1 1l8 8M9 1l-8 8" stroke="#0b0b0b" stroke-width="1.600"/></svg></button><button class="tab plus">+</button><i></i></div>
    <div class="layout">
      <div class="viewbar">
        <button aria-label="Camera undo"><svg><use href="#camundo"/></svg></button><button aria-label="Camera redo"><svg><use href="#camredo"/></svg></button><i class="sep"></i>
        <button class="two">2D</button><button aria-label="Adjust camera"><svg><use href="#camadj"/></svg></button><i class="sep"></i>
        <button aria-label="Add selection"><svg><use href="#seladd"/></svg></button><button aria-label="Subtract selection"><svg><use href="#selsub"/></svg></button><button aria-label="Toggle selection"><svg><use href="#seltog"/></svg></button><i class="sep"></i>
        <button aria-label="Select cells on"><svg><use href="#selcell"/></svg></button><button aria-label="Select points on"><svg><use href="#selpts"/></svg></button><button aria-label="Select cells through"><svg><use href="#frus"/></svg></button><button aria-label="Select points through"><svg><use href="#frusp"/></svg></button><button aria-label="Cells with polygon"><svg><use href="#polyc"/></svg></button><button aria-label="Points with polygon"><svg><use href="#polyp"/></svg></button><button aria-label="Select block"><svg><use href="#blocks"/></svg></button><button aria-label="Interactive cells"><svg><use href="#tri"/></svg></button><button aria-label="Interactive points"><svg><use href="#pts"/></svg></button><button aria-label="Hover points"><svg viewBox="0 0 16 16"><path d="M1 9h3v3H1z" fill="#e03c22"/><text x="6" y="13" class="ic-q">?</text></svg></button><button aria-label="Hover cells"><svg viewBox="0 0 16 16"><path d="M4 7l4 8H0z" fill="#a6db8c"/><text x="8" y="12" class="ic-q">?</text></svg></button><button aria-label="Clear selection"><svg><use href="#trash"/></svg></button>
        <a href="#" class="viewname">RenderView1</a>
        <button class="frame" aria-label="Split horizontal"><svg viewBox="0 0 12 12"><path d="M2 1h3v9H2zM7 1h3v9H7z" fill="#fff" stroke="#0b0b0b"/></svg></button>
        <button class="frame" aria-label="Split vertical"><svg viewBox="0 0 12 12"><path d="M2 2h8v3H2zM2 7h8v3H2z" fill="#fff" stroke="#0b0b0b"/></svg></button>
        <button class="frame" aria-label="Maximize view"><svg viewBox="0 0 12 12"><path d="M2 2h8v8H2zM2 3h8" fill="none" stroke="#0b0b0b" stroke-width="1.300"/></svg></button>
        <button class="frame" aria-label="Restore view"><svg viewBox="0 0 12 12"><path d="M4 4V2h6v5H8M2 5h5v5H2z" fill="none" stroke="#0b0b0b" stroke-width="1.300"/></svg></button>
        <button class="frame" aria-label="Close view"><svg viewBox="0 0 12 12"><path d="M2 2l8 8M10 2l-8 8" stroke="#0b0b0b" stroke-width="1.500"/></svg></button>
      </div>
      <div class="render">
        <svg id="mesh" viewBox="313 236 1206 888" role="img" aria-label="Triangulated surface mesh">
          <path id="surface" class="surface"/><path id="diagonals" class="diag"/><path id="edges" class="edges"/>
          <g class="triad"><path d="M424 1011v-50" stroke="#e0e010"/><path d="M424 951l5 12h-10z" fill="#d9d900"/><path d="M428 1012h12" stroke="#fff" stroke-width="2"/><path d="M439 1012h36" stroke="#e00000"/><path d="M485 1013l-12 5v-10z" fill="#e00000"/><circle cx="424" cy="1013" r="6" fill="#006400"/><text x="426" y="963">Y</text><text x="427" y="1011">Z</text><text x="476" y="1013">X</text></g>
          <path d="M1432 1089v17l4-4 3 7 3-1-3-7h5z" fill="#202325" stroke="#f4f4f4" stroke-width="1.200"/>
        </svg>
      </div>
    </div>
  </section>

  <aside class="right dock">
    <div class="dockhead"><h2>Color Map Editor</h2><button aria-label="Float"><svg class="ic10"><use href="#diamond"/></svg></button><button aria-label="Close"><svg class="ic16"><use href="#close"/></svg></button></div>
    <div class="cmsearch"><input class="field" placeholder="Search ... (use Esc to clear text)" aria-label="Search color map"><button class="btn sq" aria-label="Advanced"><svg class="ic16"><use href="#gear"/></svg></button><button class="btn sq" aria-label="Restore defaults" disabled><svg class="ic18"><use href="#bar"/></svg></button><button class="btn sq" aria-label="Save defaults" disabled><svg class="ic16"><use href="#barsave"/></svg></button></div>
    <p>Array Name: &lt;none&gt;</p>
    <div class="cmactions"><button class="btn sq" aria-label="Refresh" disabled><svg class="ic16"><use href="#refresh"/></svg></button><button class="btn sq" aria-label="Load range" disabled><svg class="ic18"><use href="#foldrange"/></svg></button><button class="btn sq" aria-label="Load preset" disabled><svg class="ic18"><use href="#greyfold"/></svg></button><button class="btn tall rv" disabled><svg class="ic16"><use href="#applygrey"/></svg>Render Views</button><button class="btn sq down" aria-label="Auto render"><svg class="ic16"><use href="#apply"/></svg></button></div>
  </aside>
</main>

<footer class="status"><span></span><button class="btn" aria-label="Abort" disabled><svg class="ic10" viewBox="0 0 14 14"><path d="M1 3l3-2 3 4 3-4 3 2-4 4 4 5-3 2-3-4-3 4-3-2 4-5z" fill="#a9acae"/></svg></button><div class="progress"></div></footer>

<nav class="taskbar">
  <button class="launch" aria-label="Application launcher"><svg viewBox="0 0 26 26"><circle cx="10" cy="4" r="2" fill="#fcfcfc"/><circle cx="5" cy="13" r="2.800" fill="#fcfcfc"/><circle cx="12" cy="22" r="3.400" fill="#fcfcfc"/><path d="M16 4l7 7-6 7" fill="none" stroke="#fcfcfc" stroke-width="3.200"/></svg></button>
  <button class="launch dl" aria-label="Downloads"><svg viewBox="0 0 20 22"><path d="M6 1h8v9h5l-9 11L1 10h5z" fill="#1e7bd0"/><path d="M8 1h4v10H8z" fill="#9fd2f8"/></svg></button>
  <button class="task"><svg><use href="#dolphin"/></svg><span>level_set — Dolphin</span></button>
  <button class="task"><svg><use href="#tbird"/></svg><span>Inbox - Mozilla Thunde...</span></button>
  <button class="task open"><svg><use href="#konsole"/></svg><span>level_set : paraview — ...</span></button>
  <button class="task"><svg><use href="#firefox"/></svg><span>NQBH (NQBH) — ...</span><svg class="snd"><use href="#speaker"/></svg></button>
  <button class="task open"><svg viewBox="0 0 20 22"><use href="#texbg"/><text x="3" y="18" class="ic-tex">TEX</text></svg><span>/home/nguyen/1_NQB...</span></button>
  <button class="task open"><svg viewBox="0 0 20 22"><use href="#texbg"/><text x="3" y="18" class="ic-tex">TEX</text></svg><span>NQBH_software_report...</span></button>
  <button class="task"><svg><use href="#sublime"/></svg><span>~/OpenFOAM/nguyen-...</span></button>
  <button class="task active"><svg><use href="#pv"/></svg><span>ParaView 5.6.0 64-bit</span></button>
  <div class="tray">
    <span class="lang">EN</span>
    <button aria-label="Media"><svg viewBox="0 0 18 18"><circle cx="9" cy="9" r="7.500" fill="none" stroke="#f3f4f4" stroke-width="1.300"/><path d="M6.500 4.500l6 4.500-6 4.500z" fill="#f3f4f4"/></svg></button>
    <button aria-label="Notes" class="notes"><svg viewBox="0 0 20 20"><rect width="20" height="20" fill="#f2f200"/><path d="M3 5h2M7 5h10M3 10h2M7 10h10M3 15h2M7 15h10" stroke="#333" stroke-width="1.400"/></svg></button>
    <button aria-label="Clipboard"><svg viewBox="0 0 18 18"><path d="M3 2.500h12v14H3z" fill="none" stroke="#f3f4f4" stroke-width="1.400"/><path d="M6 1h6v4H6z" fill="#f3f4f4"/><path d="M5 8h8M5 11h8M5 14h5" stroke="#f3f4f4" stroke-width="1.200"/></svg></button>
    <button aria-label="Volume"><svg viewBox="0 0 18 18"><path d="M1 6h3l5-5v16l-5-5H1z" fill="#f3f4f4"/><path d="M11 5c2 3 2 5 0 8" fill="none" stroke="#f3f4f4" stroke-width="1.300"/><path d="M13 3c4 4 4 8 0 12" fill="none" stroke="#80858a"/></svg></button>
    <button aria-label="Battery"><svg viewBox="0 0 20 18"><path d="M1 3h16v12H1zM17 6h2v6h-2" fill="none" stroke="#f3f4f4" stroke-width="1.500"/><path d="M3 5h4v8H3z" fill="#f3f4f4"/><path d="M8 9l5-4v8zM12 7h4M12 11h4" fill="#18b08c" stroke="#18b08c"/></svg></button>
    <button aria-label="Network"><svg viewBox="0 0 18 18"><path d="M2 2h13v8H2zM5 13h5M15 10v5H9v2M2 6h2" fill="none" stroke="#f3f4f4" stroke-width="1.500"/></svg></button>
    <button aria-label="Show hidden icons"><svg viewBox="0 0 18 18"><path d="M9 5l6 7H3z" fill="#f3f4f4"/></svg></button>
    <time>15:15</time>
    <button aria-label="Show desktop" class="desk"><svg viewBox="0 0 24 24"><path d="M1 1h22v22H1zM4 19h16" fill="none" stroke="#f3f4f4" stroke-width="1.400"/></svg></button>
  </div>
</nav>
<script src="mesh.js"></script>
</body>
</html>
```
FILE: styles.css
```css
* { box-sizing: border-box; }
:root { --win: #31363b; --dock: #2d3135; --base: #232629; --line: #606468; --dim: #45494d; --text: #eff0f1; --hl: #3daee9; }
body { margin: 0; height: 100vh; display: flex; flex-direction: column; overflow: hidden; background: var(--win); color: var(--text); font: 13px/18px "Noto Sans", sans-serif; }
button, input, select { font: inherit; color: inherit; margin: 0; }
button { background: none; border: 0; padding: 0; display: flex; align-items: center; justify-content: center; }
a { color: inherit; text-decoration: none; }
h1, h2, h3, p, ul { margin: 0; padding: 0; font-size: 13px; font-weight: 400; }
svg { display: block; flex: none; }
.library { position: absolute; width: 0; height: 0; }
.ic10 { width: 10px; height: 10px; }
.ic14 { width: 14px; height: 14px; }
.ic16 { width: 16px; height: 16px; }
.ic18 { width: 18px; height: 18px; }
.ic-letter { font: italic bold 18px "Noto Sans", sans-serif; fill: #0b0b0b; }
.ic-deg { font: 9px "Noto Sans", sans-serif; fill: #8b8e90; }
.ic-ax { font: 11px "Noto Sans", sans-serif; fill: #8b8e90; }
.ic-q { font: 12px "Noto Sans", sans-serif; fill: #8a8670; }
.ic-tex { font: bold 8px "Liberation Serif", serif; fill: #e0b040; }

.titlebar { height: 28px; flex: none; display: grid; grid-template-columns: 1fr auto 1fr; align-items: center; padding: 0 5px; background: linear-gradient(#3f444c, var(--win)); }
.winbtns { display: flex; justify-content: flex-end; align-items: center; gap: 11px; }
.winbtns svg { width: 12px; height: 12px; color: #fcfcfc; }
.winbtns .big svg { width: 18px; height: 18px; }
.menubar { height: 31px; flex: none; display: flex; gap: 21px; align-items: center; padding-left: 10px; }

.toolrow { height: 38px; flex: none; display: flex; gap: 8px; padding-left: 5px; align-items: center; }
.toolbar { height: 34px; display: flex; align-items: center; padding-left: 7px; background: linear-gradient(90deg, var(--line) 1px, transparent 1px 3px, var(--line) 3px 4px, transparent 4px); }
.toolbar button { width: 34px; height: 32px; }
.toolbar button svg { width: 22px; height: 22px; }
.toolbar .pressed { background: #55595d; background-clip: padding-box; border: solid transparent; border-width: 0 1px; border-radius: 4px; }
.sep { width: 8px; height: 34px; background: linear-gradient(var(--line), var(--line)) 4px 0 / 1px 100% no-repeat; }
.toolbar.time { gap: 4px; padding-left: 5px; }
.time label { margin-right: -1px; }
.cams { margin-left: 1px; }
.field { height: 30px; border: 1px solid var(--line); border-radius: 3px; padding: 0 7px; outline: 0; min-width: 0; }
input.field { background: var(--base); }
input.field::placeholder { color: #888b8d; opacity: 1; }
select.field { appearance: none; padding-left: 5px; background: linear-gradient(#34393e, #2e3338); background-image: url("data:image/svg+xml,%3Csvg xmlns='http://www.w3.org/2000/svg' width='12' height='8'%3E%3Cpath d='M1 1l5 5 5-5' fill='none' stroke='%23eff0f1'/%3E%3C/svg%3E"); background-repeat: no-repeat; background-position: right 4px center; }
select.field:disabled { border-color: var(--dim); opacity: .6; }
select.field.blue { width: 147px; background-color: var(--hl); border-color: #3c86ad; color: #fcfcfc; }
.rep { padding-right: 1px; }
.w50 { width: 50px; }
.w84 { width: 84px; margin-left: 6px; }
.w148 { width: 148px; }
.spin { display: flex; align-items: center; position: relative; }
.spin .field { width: 50px; }
.spin svg { position: absolute; right: 5px; width: 12px; height: 20px; }
.combo { position: relative; display: flex; align-items: center; }
.toolbar .combo { margin-left: 1px; }
.combo .dot { position: absolute; left: 9px; }
.combo select.field { padding-left: 24px; }
.dot { width: 13px; height: 13px; border-radius: 50%; background: #c67f3c; border: 1px solid #17191b; }
.navy { width: 15px; height: 15px; background: #00007f; }

.workspace { flex: 1; min-height: 0; display: flex; gap: 3px; padding: 1px 2px 5px 1px; }
.dock { border: 1px solid var(--line); border-radius: 3px; background: var(--dock); }
.dockhead { height: 30px; display: flex; align-items: center; padding: 0 5px 4px 4px; gap: 13px; color: #a9acae; }
.dockhead h2 { flex: 1; color: var(--text); }
.left { width: 303px; flex: none; display: flex; flex-direction: column; }
.pipeline { height: 299px; display: flex; flex-direction: column; padding: 0 1px 1px; }
.pipeline .dockhead { margin: 0 -1px; }
.tree { flex: 1; border: 1px solid var(--line); border-radius: 2px; background: var(--base); list-style: none; padding-top: 1px; }
.tree li { height: 22px; display: flex; align-items: center; }
.vis { width: 50px; padding-left: 3px; }
.tree .name { padding: 0 5px 0 2px; margin-left: 1px; height: 18px; }
.tree .sel { background: var(--hl); }
.tabs { display: flex; height: 28px; flex: none; margin-top: 1px; margin-left: -1px; }
.tab { padding: 0 8px; background: #2b2f33; border-bottom: 1px solid var(--line); }
.tab.on { padding: 0 7px; background: var(--win); border: 1px solid var(--line); border-bottom-color: transparent; border-radius: 3px 3px 0 0; }
.tabs i { flex: 1; border-bottom: 1px solid var(--line); }
.props { margin-top: 1px; flex: 1; min-height: 0; display: flex; flex-direction: column; padding: 0 7px 6px; }
.props .dockhead { margin: 0 -7px; flex: none; }
.btn { height: 30px; border: 1px solid var(--line); border-radius: 3px; background: linear-gradient(#33383d, #2f3439); gap: 6px; flex: none; }
.btn:disabled { border-color: var(--dim); color: #6c7073; background: #2f3337; }
.btn.sq { width: 30px; }
.btn.tall { width: 82px; height: 32px; }
.actions { display: flex; gap: 4px; align-items: center; margin-top: 5px; }
.help { color: #2f9fe4; font-weight: 700; font-size: 18px; }
.search { display: flex; gap: 4px; margin: 8px 0 7px; }
.search .field { flex: 1; }
.scroll { flex: 1; min-height: 0; display: grid; grid-template-columns: 1fr 20px; grid-template-rows: 1fr 20px; }
.view { overflow: hidden; min-width: 0; min-height: 0; }
.content { width: 330px; padding: 1px 0 0; }
.vbar, .hbar { background: #303438; }
.vbar { border-left: 1px solid var(--dim); padding: 7px 6px; }
.hbar { border-top: 1px solid var(--dim); padding: 6px 6px; }
.vbar i, .hbar i { display: block; border-radius: 3px; background: #75797c; }
.vbar i { width: 6px; height: 278px; }
.hbar i { width: 206px; height: 6px; }
.row { display: flex; gap: 5px; align-items: center; }
.group { width: 187px; justify-content: flex-start; padding-left: 6px; gap: 8px; overflow: hidden; -webkit-text-stroke: .5px; }
.group span { white-space: nowrap; }
.arrays { margin: 8px 0; height: 88px; border: 1px solid var(--line); background: var(--base); display: flex; flex-direction: column; }
.arrays label { height: 28px; display: flex; align-items: center; gap: 7px; padding-left: 5px; }
.arrays .hd { gap: 11px; height: 30px; background: #30353a; border-bottom: 1px solid var(--dim); }
input[type=checkbox] { appearance: none; width: 16px; height: 16px; border: 1px solid var(--hl); border-radius: 3px; background: var(--hl); box-shadow: inset 0 0 0 2px var(--base); }
.prop { display: flex; height: 30px; margin-top: 8px; }
.prop label { width: 121px; line-height: 16px; margin-left: -1px; }
.grow { flex: 1; }
h3 { -webkit-text-stroke: .5px; margin: 10px 0 0 -1px; height: 19px; line-height: 18px; border-bottom: 1px solid var(--line); }
h3 + .prop { margin-top: 7px; }
.prop + h3 { margin-top: 9px; }
.pad { margin: 7px 0 6px; }
.pad .grow { margin-left: 1px; }
.edit + h3 { margin-top: 9px; }
input[type=range] { appearance: none; background: none; width: 74px; height: 30px; margin-right: 8px; }
input[type=range]::-webkit-slider-runnable-track { height: 6px; border-radius: 3px; background: #65696c; }
input[type=range].full::-webkit-slider-runnable-track { background: var(--hl); }
input[type=range]::-webkit-slider-thumb { appearance: none; width: 18px; height: 18px; margin-top: -6px; border-radius: 50%; background: var(--win); border: 1px solid #85898c; }
.edgecolor { width: 100%; margin-top: 7px; gap: 4px; justify-content: flex-start; padding-left: 109px; }

.center { flex: 1; min-width: 0; display: flex; flex-direction: column; }
.layouts { margin: 0; }
.layouts .tab.on { gap: 14px; padding: 0 7px 0 6px; background: var(--dock); }
.layouts .plus { width: 80px; }
.layout { flex: 1; min-height: 0; border: 1px solid var(--line); border-top: 0; padding: 0 2px 2px; display: flex; flex-direction: column; background: var(--dock); }
.viewbar { height: 31px; flex: none; display: flex; align-items: center; padding-right: 2px; }
.viewbar button { width: 24px; height: 26px; }
.viewbar svg { width: 14px; height: 14px; }
.viewbar .sep { height: 24px; }
.viewbar .two { font-size: 10px; color: #0b0c0d; }
.viewname { margin: 0 12px 0 auto; -webkit-text-stroke: .5px; border-bottom: 1px solid var(--text); line-height: 16px; }
.viewbar .frame { width: 25px; border: 1px solid var(--line); border-radius: 3px; margin-left: 4px; background: #2f3337; }
.viewbar .frame svg { width: 12px; height: 12px; }
.viewname + .frame { margin-left: 0; }
.render { flex: 1; min-height: 0; border: 2px solid #0000ff; outline: 1px solid #22242c; outline-offset: -3px; background: #52576e; }
#mesh { width: 100%; height: 100%; }
.surface { fill: #c8c4bb; stroke: #00008f; stroke-width: 1.300; }
.edges { fill: none; stroke: #00008f; stroke-width: 1.100; }
.diag { fill: none; stroke: #00008f; stroke-width: .7; opacity: .8; }
.triad text { font: 17px "Liberation Sans", sans-serif; fill: #fff; }

.right { width: 391px; flex: none; }
.cmsearch, .cmactions { display: flex; gap: 5px; align-items: center; padding: 0 7px; }
.cmsearch { margin-top: 5px; }
.cmsearch .field { flex: 1; }
.cmsearch .btn, .cmactions .sq { width: 29px; }
.right p { margin: 7px 5px 13px; }
.cmactions .sq { margin-right: -1px; }
.right .rv { width: 117px; margin-left: auto; }
.btn.down { background: #55595d; }

.status { height: 31px; flex: none; display: grid; grid-template-columns: 1fr 27px 929px; gap: 2px; align-items: start; padding-bottom: 2px; }
.status .btn { height: 26px; margin-top: 1px; }
.progress { height: 29px; border: 1px solid #25282b; border-bottom-color: var(--dim); border-radius: 2px; }

.taskbar { height: 36px; flex: none; border-top: 1px solid #75797c; display: flex; gap: 2px; padding-top: 1px; align-items: flex-start; }
.launch { width: 36px; height: 33px; }
.launch svg { width: 26px; height: 26px; }
.dl { width: 33px; }
.dl svg { width: 18px; height: 22px; }
.task { width: 189px; height: 33px; flex: none; background: #3f4448; justify-content: flex-start; gap: 6px; padding: 0 6px; color: #e4e5e6; white-space: nowrap; }
.task svg { width: 22px; height: 22px; }
.task span { flex: 1; text-align: left; }
.task .snd { width: 16px; height: 16px; }
.task.open { background: #4e5357; box-shadow: inset 0 3px #72767a; }
.task.active { background: #355e78; box-shadow: inset 0 3px var(--hl); }
.tray { flex: 1; height: 33px; display: flex; align-items: center; justify-content: flex-end; gap: 8px; padding-right: 6px; }
.tray svg { width: 18px; height: 18px; }
.tray .notes svg { width: 20px; height: 20px; }
.lang { color: #3d4ba0; margin-right: 3px; }
time { font-size: 24px; margin: 0 1px 0 -2px; }
.tray .desk svg { width: 22px; height: 22px; }
```
FILE: mesh.js
```js
// Boundary and symmetry-line nodes of one quarter of the 30 x 30 mesh.
const N = 15, CX = 915.5, CY = 679.7;
const topRim = [[513.3, 318.3], [522.7, 311], [539.7, 297], [560.7, 284], [584.7, 271.3], [610.7, 261], [638.7, 252.7], [667.7, 246.7], [697.3, 242.3], [727.7, 239.3], [758.3, 237.7], [789.3, 237], [821, 236.5], [852.5, 236], [884, 236], [CX, 236]];
const sideRim = [[513.3, 318.3], [504, 328.3], [489, 343.3], [473.7, 362.3], [460, 384], [446, 407.3], [435, 431.3], [424.3, 457], [415.3, 483.5], [407.7, 511.3], [401.7, 539], [397, 566.7], [392.7, 595], [390, 623.3], [388.3, 651.3], [387.7, CY]];
const midRowX = [387.7, 426.7, 465.3, 502.7, 539.3, 575.7, 610.7, 645.7, 680, 714.7, 748.3, 782, 815.3, 848.7, 882, CX];
const midColY = [236, 266.7, 297.3, 328.3, 358.3, 388.7, 418.3, 447.3, 477.3, 506.3, 535.3, 564.3, 593.3, 622.3, 651.3, CY];

const q = [];
for (let j = 0; j <= N; j++) {
  q.push([]);
  for (let i = 0; i <= N; i++) {
    if (j === 0) q[j].push(topRim[i]);
    else if (i === 0) q[j].push(sideRim[j]);
    else if (j === N) q[j].push([midRowX[i], CY]);
    else if (i === N) q[j].push([CX, midColY[j]]);
    else q[j].push([topRim[i][0], sideRim[j][1]]);
  }
}
// Relax the inner nodes: each one settles at the mean of its neighbours.
for (let k = 0; k < 600; k++)
  for (let j = 1; j < N; j++)
    for (let i = 1; i < N; i++)
      q[j][i] = [0, 1].map(c => (q[j - 1][i][c] + q[j + 1][i][c] + q[j][i - 1][c] + q[j][i + 1][c]) / 4);

function node(i, j) {
  const p = q[j > N ? 2 * N - j : j][i > N ? 2 * N - i : i];
  return [i > N ? 2 * CX - p[0] : p[0], j > N ? 2 * CY - p[1] : p[1]];
}
const line = pts => "M" + pts.map(p => p[0].toFixed(1) + " " + p[1].toFixed(1)).join("L");
const M = 2 * N, idx = [...Array(M + 1).keys()];
const rim = [...idx.map(i => node(i, 0)), ...idx.map(j => node(M, j)), ...idx.map(i => node(M - i, M)), ...idx.map(j => node(0, M - j))];
let edges = "", diagonals = "";
for (const a of idx) edges += line(idx.map(b => node(a, b))) + line(idx.map(b => node(b, a)));
for (let j = 0; j < M; j++) for (let i = 0; i < M; i++) diagonals += line([node(i, j), node(i + 1, j + 1)]);
document.getElementById("surface").setAttribute("d", line(rim) + "Z");
document.getElementById("edges").setAttribute("d", edges);
document.getElementById("diagonals").setAttribute("d", diagonals);
```
